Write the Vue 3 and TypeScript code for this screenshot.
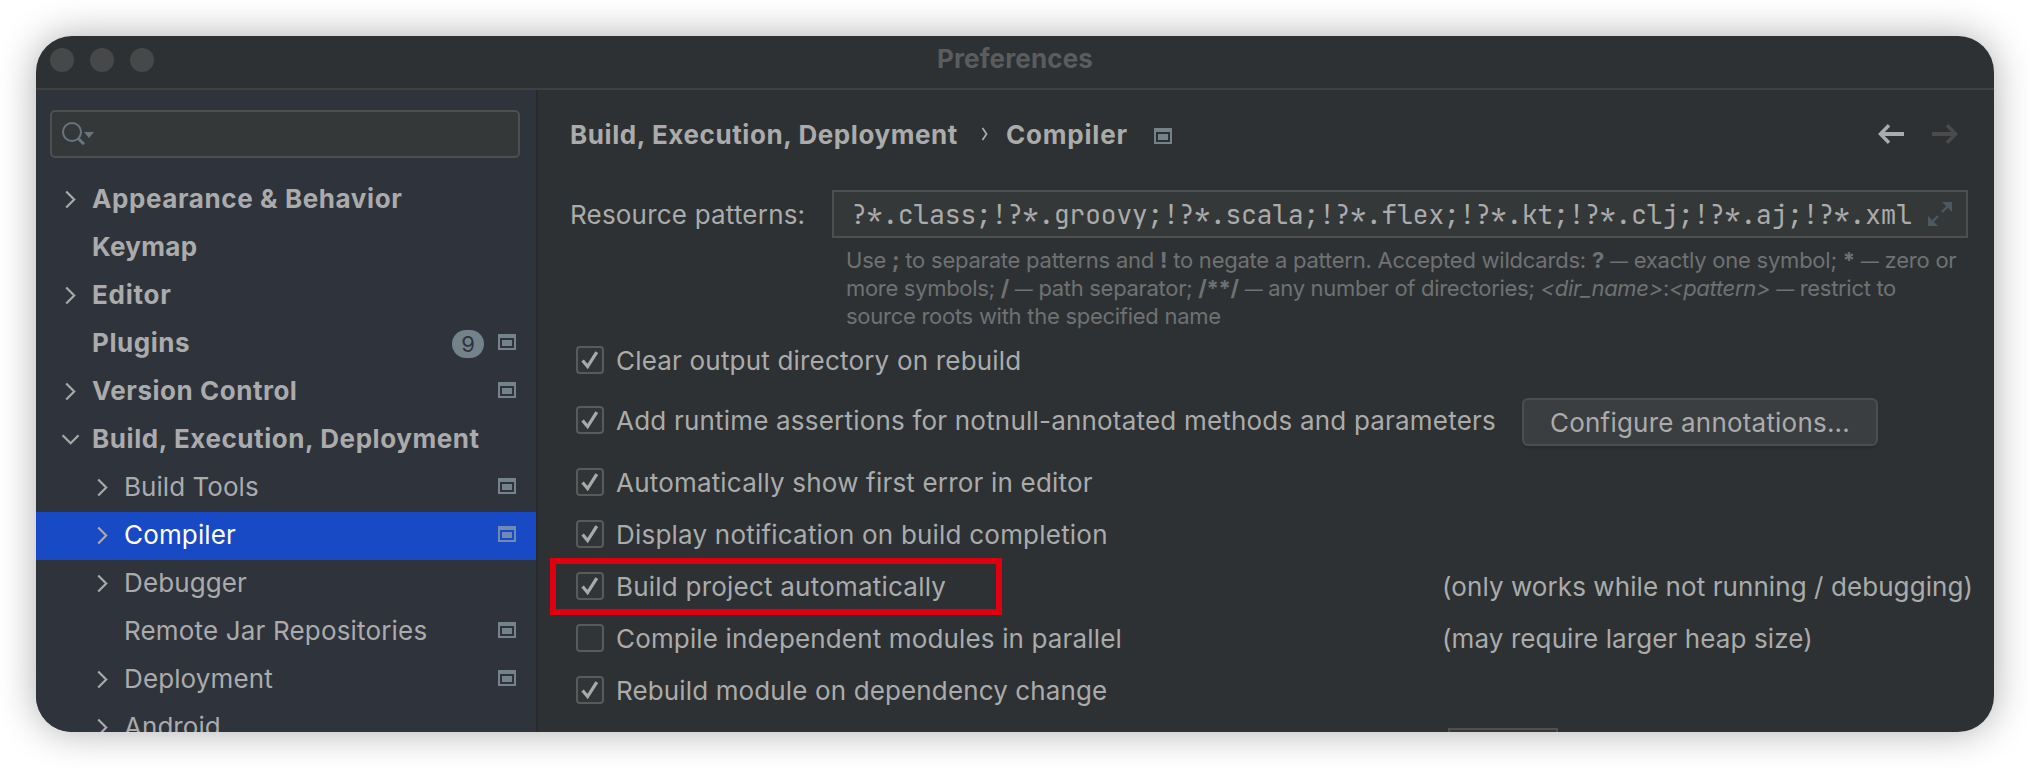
<script setup lang="ts">
interface TreeItem {
  label: string
  level: 0 | 1
  arrow?: 'closed' | 'open'
  project?: boolean
  badge?: number
  selected?: boolean
  tracking: number
}

interface Option {
  label: string
  checked: boolean
  gap: number
  tracking: number
  note?: string
  noteTracking?: number
  button?: string
  marked?: boolean
}

const tree: TreeItem[] = [
  { label: 'Appearance & Behavior', level: 0, arrow: 'closed', tracking: 0.6 },
  { label: 'Keymap', level: 0, tracking: 0.3 },
  { label: 'Editor', level: 0, arrow: 'closed', tracking: 0.75 },
  { label: 'Plugins', level: 0, project: true, badge: 9, tracking: 0.55 },
  { label: 'Version Control', level: 0, arrow: 'closed', project: true, tracking: 0.52 },
  { label: 'Build, Execution, Deployment', level: 0, arrow: 'open', tracking: 0.57 },
  { label: 'Build Tools', level: 1, arrow: 'closed', project: true, tracking: 0.05 },
  { label: 'Compiler', level: 1, arrow: 'closed', project: true, selected: true, tracking: 0.15 },
  { label: 'Debugger', level: 1, arrow: 'closed', tracking: 0.12 },
  { label: 'Remote Jar Repositories', level: 1, project: true, tracking: 0.17 },
  { label: 'Deployment', level: 1, arrow: 'closed', project: true, tracking: 0.12 },
  { label: 'Android', level: 1, arrow: 'closed', tracking: 0.05 },
]

const options: Option[] = [
  { label: 'Clear output directory on rebuild', checked: true, gap: 32, tracking: 0.19 },
  {
    label: 'Add runtime assertions for notnull-annotated methods and parameters',
    checked: true,
    gap: 34,
    tracking: 0.2,
    button: 'Configure annotations...',
  },
  { label: 'Automatically show first error in editor', checked: true, gap: 24, tracking: 0.19 },
  { label: 'Display notification on build completion', checked: true, gap: 24, tracking: 0.21 },
  {
    label: 'Build project automatically',
    checked: true,
    gap: 24,
    tracking: 0.22,
    note: '(only works while not running / debugging)',
    noteTracking: 0.08,
    marked: true,
  },
  {
    label: 'Compile independent modules in parallel',
    checked: false,
    gap: 24,
    tracking: 0.15,
    note: '(may require larger heap size)',
    noteTracking: 0.1,
  },
  { label: 'Rebuild module on dependency change', checked: true, gap: 24, tracking: 0.13 },
]

const patterns = ['class', 'groovy', 'scala', 'flex', 'kt', 'clj', 'aj', 'xml']
const patternText = patterns.map((p) => '!?*.' + p).join(';')
</script>

<template>
  <div class="desktop">
    <div class="window">
      <header class="titlebar">
        <div class="lights"><i></i><i></i><i></i></div>
        <span class="title">Preferences</span>
      </header>
      <div class="body">
        <aside class="sidebar">
          <div class="search">
            <svg width="36" height="28" viewBox="0 0 36 28" fill="none">
              <circle cx="12" cy="12" r="9" stroke="#667780" stroke-width="2" />
              <path d="M18 18.2l6 6" stroke="#667780" stroke-width="3" />
              <path d="M24 12h10l-5 6z" fill="#667780" />
            </svg>
          </div>
          <ul class="tree">
            <li
              v-for="item in tree"
              :key="item.label"
              class="node"
              :class="{ child: item.level === 1, selected: item.selected }"
            >
              <span class="arrow">
                <svg v-if="item.arrow === 'closed'" width="20" height="20" viewBox="0 0 20 20">
                  <path d="M6.2 1.4l8 8.1-8 8.1" />
                </svg>
                <svg v-else-if="item.arrow === 'open'" width="20" height="20" viewBox="0 0 20 20">
                  <path d="M2.6 5.2l8 8 8-8" />
                </svg>
              </span>
              <span class="label" :style="{ letterSpacing: item.tracking + 'px' }">{{ item.label }}</span>
              <span v-if="item.badge" class="badge">{{ item.badge }}</span>
              <svg v-if="item.project" class="project" width="18" height="16" viewBox="0 0 18 16">
                <path fill-rule="evenodd" d="M0 0h18v16H0zM2 4v10h14V4z" />
                <path d="M4 6h10v6H4z" />
              </svg>
            </li>
          </ul>
        </aside>
        <main class="content">
          <div class="crumbs">
            <span class="crumb">Build, Execution, Deployment</span>
            <svg class="sep" width="8" height="14" viewBox="0 0 8 14"><path d="M1.5 1l4 6-4 6" /></svg>
            <span class="crumb last">Compiler</span>
            <svg class="project" width="18" height="16" viewBox="0 0 18 16">
              <path fill-rule="evenodd" d="M0 0h18v16H0zM2 4v10h14V4z" />
              <path d="M4 6h10v6H4z" />
            </svg>
            <div class="history">
              <svg width="26" height="20" viewBox="0 0 26 20" stroke="#a9abac">
                <path d="M2.5 10H26" stroke-width="4" /><path d="M11 1.2L2.4 10l8.6 8.8" stroke-width="3.4" />
              </svg>
              <svg width="26" height="20" viewBox="0 0 26 20" stroke="#4b4b4b">
                <path d="M23.5 10H0" stroke-width="4" /><path d="M15 1.2l8.6 8.8-8.6 8.8" stroke-width="3.4" />
              </svg>
            </div>
          </div>

          <div class="resource">
            <span class="name">Resource patterns:</span>
            <div class="field">
              <div class="value"><span class="code">{{ patternText }}</span></div>
              <svg class="expand" width="24" height="24" viewBox="0 0 24 24">
                <path d="M14 0h10v10zM0 14v10h10z" fill="#4d595f" />
                <path d="M14 10l6-6M10 14l-6 6" stroke="#4d595f" stroke-width="2.4" />
              </svg>
            </div>
          </div>

          <div class="hint">
            <div class="line one">Use <b>;</b> to separate patterns and <b>!</b> to negate a pattern. Accepted wildcards: <b>?</b> <s>—</s> exactly one symbol; <b>*</b> <s>—</s> zero or</div>
            <div class="line two">more symbols; <b>/</b> <s>—</s> path separator; <b>/**/</b> <s>—</s> any number of directories; <i>&lt;dir_name&gt;</i>:<i>&lt;pattern&gt;</i> <s>—</s> restrict to</div>
            <div class="line three">source roots with the specified name</div>
          </div>

          <div class="options">
            <div
              v-for="opt in options"
              :key="opt.label"
              class="option"
              :style="{ marginBottom: opt.gap + 'px' }"
            >
              <span class="box">
                <svg v-if="opt.checked" width="24" height="24" viewBox="0 0 24 24">
                  <path d="M4.6 12.6l5 6L18.8 4.2" />
                </svg>
              </span>
              <span class="text" :style="{ letterSpacing: opt.tracking + 'px' }">{{ opt.label }}</span>
              <button v-if="opt.button" class="btn" type="button">{{ opt.button }}</button>
              <span v-if="opt.note" class="note" :style="{ letterSpacing: opt.noteTracking + 'px' }">{{ opt.note }}</span>
              <span v-if="opt.marked" class="marker"></span>
            </div>
            <div class="heap"></div>
          </div>
        </main>
      </div>
    </div>
  </div>
</template>

<style>
html,
body {
  margin: 0;
  background: #fff;
  overflow: hidden;
}
</style>

<style scoped>
.desktop {
  box-sizing: border-box;
  width: 2030px;
  height: 768px;
  padding: 36px;
  background: #fff;
  overflow: hidden;
  font-family: Inter, "Liberation Sans", sans-serif;
  font-size: 26px;
  color: #ababab;
  white-space: nowrap;
}
.window {
  display: flex;
  flex-direction: column;
  width: 1958px;
  height: 696px;
  border-radius: 36px;
  background: #2d3133;
  box-shadow: 0 0 38px rgba(0, 0, 0, 0.32);
  overflow: hidden;
}
.titlebar {
  box-sizing: border-box;
  flex: none;
  display: grid;
  grid-template-columns: 1fr auto 1fr;
  height: 54px;
  border-bottom: 2px solid #404040;
  padding: 0 14px;
}
.lights {
  display: flex;
  gap: 16px;
  padding-top: 12px;
}
.lights i {
  width: 24px;
  height: 24px;
  border-radius: 50%;
  background: #464849;
}
.title {
  line-height: 45px;
  font-weight: 700;
  color: #5b5c5e;
  letter-spacing: 0.15px;
}
.body {
  flex: 1;
  min-height: 0;
  display: flex;
}
.sidebar {
  box-sizing: border-box;
  flex: none;
  width: 502px;
  border-right: 2px solid #282a2d;
  background: #2f333c;
  padding-top: 20px;
  overflow: hidden;
}
.search {
  box-sizing: border-box;
  margin: 0 16px 18px 14px;
  height: 48px;
  border: 2px solid #504f4f;
  border-radius: 5px;
  background: #353839;
  padding: 8px 0 0 8px;
}
.search svg {
  display: block;
}
.tree {
  list-style: none;
  margin: 0;
  padding: 0;
}
.node {
  box-sizing: border-box;
  display: flex;
  align-items: center;
  height: 48px;
  padding: 0 20px 3px 24px;
  font-weight: 700;
}
.node.child {
  padding-left: 56px;
  font-weight: 400;
}
.node.selected {
  background: #184ac6;
  color: #fff;
}
.arrow {
  flex: none;
  width: 20px;
  height: 20px;
  margin-right: 12px;
  padding-top: 2px;
}
.arrow svg {
  display: block;
}
.arrow path {
  fill: none;
  stroke: #a9a9ab;
  stroke-width: 2.2;
}
.label {
  flex: 1;
}
.badge {
  flex: none;
  width: 32px;
  height: 28px;
  margin: 3px 14px 0 0;
  border-radius: 14px;
  background: #74828b;
  color: #2f333c;
  font-size: 22px;
  font-weight: 400;
  line-height: 28px;
  text-align: center;
}
.project {
  flex: none;
  display: block;
  fill: #74828b;
}
.node .project {
  margin-bottom: 2px;
}
.node.selected .project {
  fill: #708ab2;
}
.content {
  flex: 1;
  min-width: 0;
  padding-left: 32px;
  overflow: hidden;
}
.crumbs {
  display: flex;
  align-items: center;
  height: 88px;
  padding: 0 36px 0 0;
  font-weight: 700;
}
.crumb {
  width: 387px;
  letter-spacing: 0.58px;
}
.sep {
  margin: 0 17px 0 24px;
  fill: none;
  stroke: #a9a9ab;
  stroke-width: 1.8;
}
.crumb.last {
  width: 122px;
  margin-right: 26px;
  letter-spacing: 0.8px;
}
.crumbs .project {
  margin-top: 4px;
}
.history {
  display: flex;
  gap: 28px;
  margin-left: auto;
}
.history svg {
  fill: none;
}
.resource {
  display: flex;
  align-items: center;
  margin-top: 12px;
  height: 48px;
}
.name {
  width: 262px;
  padding-top: 1px;
  letter-spacing: 0.2px;
}
.field {
  box-sizing: border-box;
  display: flex;
  align-items: center;
  width: 1136px;
  height: 48px;
  border: 2px solid #504f4f;
  background: #353839;
  padding: 0 14px 0 12px;
}
.value {
  display: flex;
  justify-content: flex-end;
  width: 1066px;
  margin-right: 16px;
  padding-top: 2px;
  overflow: hidden;
}
.code {
  flex: none;
  font-family: "JetBrains Mono", "DejaVu Sans Mono", "Liberation Mono", monospace;
  font-variant-ligatures: none;
  line-height: 42px;
}
.expand {
  flex: none;
}
.hint {
  margin: 8px 0 0 276px;
  font-size: 22px;
  line-height: 28px;
  color: #707172;
}
.hint .line {
  height: 28px;
}
.hint s {
  text-decoration: none;
  font-size: 18px;
  line-height: 1;
}
.one {
  letter-spacing: -0.23px;
}
.two {
  letter-spacing: -0.31px;
}
.three {
  letter-spacing: -0.27px;
}
.options {
  padding: 16px 0 0 6px;
}
.option {
  position: relative;
  display: flex;
  align-items: center;
  height: 28px;
}
.box {
  box-sizing: border-box;
  flex: none;
  width: 28px;
  height: 28px;
  margin-right: 12px;
  border: 2px solid #5a5a5a;
  border-radius: 4px;
  background: #303638;
}
.box svg {
  display: block;
}
.box path {
  fill: none;
  stroke: #a9a9a9;
  stroke-width: 3.2;
}
.text {
  flex: none;
}
.btn {
  box-sizing: border-box;
  position: absolute;
  left: 946px;
  top: -8px;
  width: 356px;
  height: 48px;
  border: 2px solid #4c4d4e;
  border-radius: 6px;
  background: #3b3e40;
  box-shadow: 0 2px 2px rgba(0, 0, 0, 0.12);
  color: #ababab;
  font: inherit;
  letter-spacing: 0.2px;
  line-height: 42px;
  padding: 2px 0 0;
}
.note {
  position: absolute;
  left: 866px;
}
.marker {
  position: absolute;
  left: -26px;
  top: -14px;
  box-sizing: border-box;
  width: 452px;
  height: 57px;
  border: 6px solid #df000f;
}
.heap {
  box-sizing: border-box;
  width: 110px;
  height: 48px;
  margin-left: 872px;
  border: 2px solid #504f4f;
  background: #353839;
}
</style>
